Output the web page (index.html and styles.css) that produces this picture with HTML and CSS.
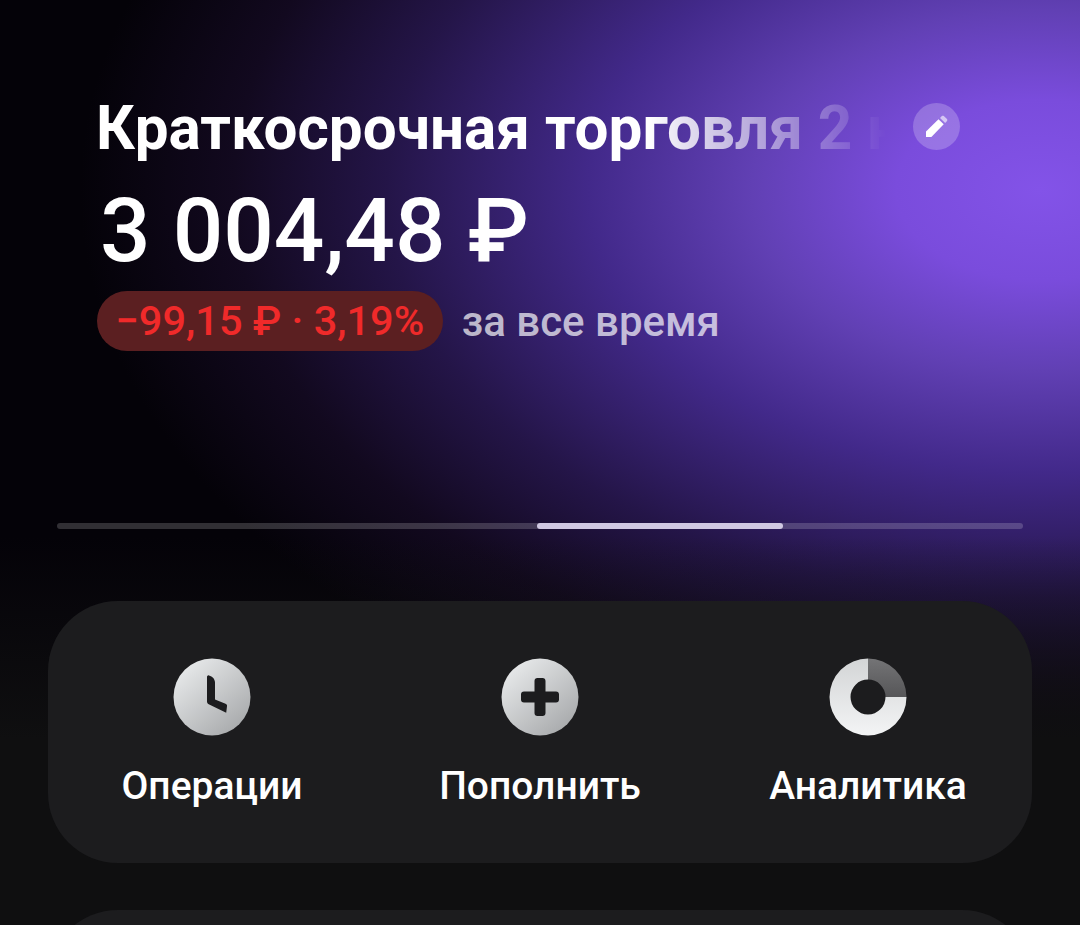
FILE: index.html
```html
<!DOCTYPE html>
<html>
<head>
  <meta charset="utf-8">
  <meta name="viewport" content="width=device-width">
  <link rel="stylesheet" href="styles.css">
  <title>Краткосрочная торговля</title>
</head>
<body>
  <header class="hero">
    <div class="title-row">
      <h1 class="title">Краткосрочная торговля 2 на бирже</h1>
      <button type="button" class="edit">
        <svg viewBox="0 0 24 24" width="24" height="24">
          <path d="M1 23v-5.400L13.500 5.300l5.200 5L6.400 23z" fill="#fff"/>
          <path d="M15 3.900l1.900-1.800c.6-.5 1.300-.5 1.900 0l3.200 3c.5.6.5 1.300 0 1.900l-1.800 1.900z" fill="#fff" fill-opacity="0.6"/>
        </svg>
      </button>
    </div>
    <div class="amount">3 004,48 ₽</div>
    <div class="change">
      <span class="badge">−99,15 ₽ · 3,19%</span>
      <span class="period">за все время</span>
    </div>
  </header>

  <div class="progress">
    <span class="seg-first"></span>
    <span class="seg-active"></span>
  </div>

  <section class="card actions">
    <div class="action">
      <svg class="icon" viewBox="0 0 78 78">
        <defs>
          <linearGradient id="metal1" x1="0.15" y1="0.1" x2="0.85" y2="0.9">
            <stop offset="0" stop-color="#e6e8e9"/>
            <stop offset="1" stop-color="#a9abad"/>
          </linearGradient>
        </defs>
        <circle cx="39" cy="39" r="38.5" fill="url(#metal1)"/>
        <path d="M34 19c0-1 1-1.900 2-1.600 3.500 1 6 3.600 6 7.100v17l10.500 4.300c1.200.5 1.700 1.200 1.500 2.400l-.8 6.500-17.500-8.500c-1.200-.6-1.700-1.500-1.700-2.700z" fill="#1c1c1e"/>
      </svg>
      <span class="label">Операции</span>
    </div>
    <div class="action">
      <svg class="icon" viewBox="0 0 78 78">
        <defs>
          <linearGradient id="metal2" x1="0.15" y1="0.1" x2="0.85" y2="0.9">
            <stop offset="0" stop-color="#e6e8e9"/>
            <stop offset="1" stop-color="#a9abad"/>
          </linearGradient>
        </defs>
        <circle cx="39" cy="39" r="38.5" fill="url(#metal2)"/>
        <path d="M33.500 23c0-1.900 1.100-3 3-3h5c1.900 0 3 1.100 3 3v10.500H55c1.900 0 3 1.100 3 3v5c0 1.900-1.100 3-3 3H44.500V55c0 1.900-1.100 3-3 3h-5c-1.900 0-3-1.100-3-3V44.500H23c-1.900 0-3-1.100-3-3v-5c0-1.900 1.100-3 3-3h10.500z" fill="#1c1c1e"/>
      </svg>
      <span class="label">Пополнить</span>
    </div>
    <div class="action">
      <svg class="icon" viewBox="0 0 78 78">
        <defs>
          <linearGradient id="ring" x1="0" y1="0" x2="0" y2="1">
            <stop offset="0" stop-color="#d3d5d6"/>
            <stop offset="1" stop-color="#f3f4f5"/>
          </linearGradient>
          <linearGradient id="slice" x1="0" y1="0" x2="0" y2="1">
            <stop offset="0" stop-color="#747476"/>
            <stop offset="1" stop-color="#565658"/>
          </linearGradient>
        </defs>
        <path d="M39 .5A38.500 38.500 0 1 0 77.500 39H56.500A17.500 17.500 0 1 1 39 21.500z" fill="url(#ring)"/>
        <path d="M39 .5A38.500 38.500 0 0 1 77.500 39H56.500A17.500 17.500 0 0 0 39 21.500z" fill="url(#slice)"/>
      </svg>
      <span class="label">Аналитика</span>
    </div>
  </section>

  <div class="next-clip">
    <section class="card next"></section>
  </div>
</body>
</html>
```

FILE: styles.css
```css
body {
  box-sizing: border-box;
  height: 925px;
  margin: 0;
  overflow: hidden;
  color: #ffffff;
  font-family: Roboto, "Noto Sans", sans-serif;
  background-color: #0f0f10;
  background-image:
    linear-gradient(180deg, rgba(15, 15, 16, 0) 58%, #0f0f10 80%),
    radial-gradient(ellipse 960px 600px at 1040px 190px, #8353e8 0%, #7a4cdc 15%, #6140b4 30%, #42298a 47%, #241548 68%, #12091f 84%, #040208 100%);
}

.hero {
  padding: 96px 0 0 97px;
}
.title-row {
  display: flex;
  align-items: center;
  gap: 27px;
}
.title {
  width: 790px;
  margin: 0 0 0 -1px;
  overflow: hidden;
  white-space: nowrap;
  font-size: 60.2px;
  font-weight: 700;
  line-height: 66px;
  -webkit-mask-image: linear-gradient(90deg, #000 70%, rgba(0, 0, 0, 0) 100%);
  mask-image: linear-gradient(90deg, #000 70%, rgba(0, 0, 0, 0) 100%);
}
.edit {
  display: flex;
  align-items: center;
  justify-content: center;
  width: 47px;
  height: 47px;
  margin-bottom: 6px;
  padding: 0;
  border: 0;
  border-radius: 50%;
  background-color: rgba(255, 255, 255, 0.22);
}
.amount {
  margin-top: 19px;
  padding-left: 3px;
  font-size: 89px;
  font-weight: 500;
  line-height: 100px;
}
.change {
  display: flex;
  align-items: center;
  gap: 19px;
  margin-top: 10px;
}
.badge {
  padding: 0 18.5px;
  border-radius: 30px;
  background-color: #5b1f21;
  color: #f02a2a;
  font-size: 41.5px;
  font-weight: 500;
  line-height: 60px;
}
.period {
  color: rgba(255, 255, 255, 0.7);
  font-size: 42px;
  font-weight: 500;
}

.progress {
  display: flex;
  height: 6px;
  margin: 172px 57px 0;
  border-radius: 3px;
  overflow: hidden;
  background-color: rgba(255, 255, 255, 0.18);
}
.seg-first {
  width: 480px;
}
.seg-active {
  width: 246px;
  border-radius: 3px;
  background-color: #d0c8e2;
}

.card {
  margin: 0 48px;
  background-color: #1c1c1e;
  border-radius: 70px;
}
.actions {
  display: grid;
  grid-template-columns: repeat(3, 1fr);
  height: 262px;
  margin-top: 72px;
  padding-top: 57px;
  box-sizing: border-box;
}
.action {
  display: flex;
  flex-direction: column;
  align-items: center;
}
.icon {
  display: block;
  width: 78px;
  height: 78px;
}
.label {
  margin-top: 28px;
  font-size: 39px;
  line-height: 44px;
  font-weight: 500;
}
.next-clip {
  height: 15px;
  margin-top: 47px;
  overflow: hidden;
}
.next {
  height: 200px;
}
```
